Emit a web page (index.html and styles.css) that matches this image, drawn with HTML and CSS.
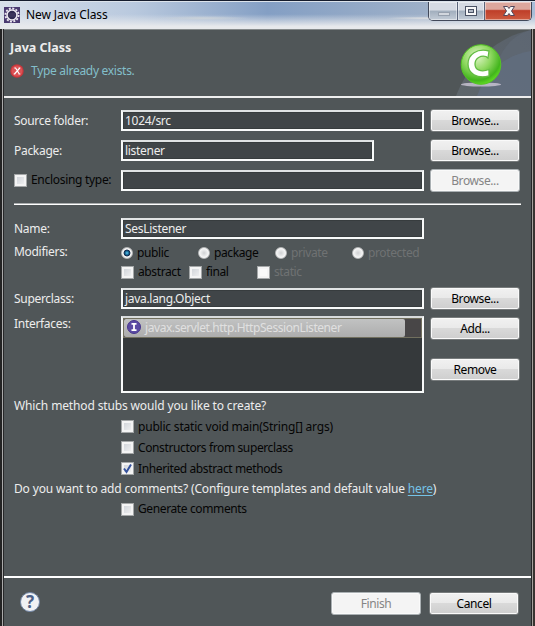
FILE: index.html
```html
<!DOCTYPE html>
<html lang="en">
<head>
<meta charset="utf-8">
<title>New Java Class</title>
<link rel="stylesheet" href="styles.css">
</head>
<body>
<div class="window">
  <div class="titlebar">
    <svg class="app-icon" width="16" height="16" viewBox="0 0 16 16"><rect width="16" height="16" fill="#493970"/><circle cx="8" cy="8" r="6.6" fill="none" stroke="#eeeaf2" stroke-width="1.8" stroke-dasharray="2 1.46"/><circle cx="8" cy="8" r="5" fill="#302a51" stroke="#eeeaf2" stroke-width="1.6"/><path d="M4.4 7h7.2M4.4 9h7.2" stroke="#554c72" stroke-width=".7"/></svg>
    <span class="title">New Java Class</span>
    <div class="controls">
      <div class="ctl"><svg width="28" height="19"><rect x="9.5" y="10.500" width="11" height="3" fill="#d2d7de" stroke="#96a0ae"/></svg></div>
      <div class="ctl"><svg width="26" height="19"><rect x="7.500" y="4.500" width="11" height="9" fill="#f7f7f8" stroke="#4b5365"/><rect x="10.500" y="7.500" width="5" height="3" fill="#b3bac6" stroke="#4b5365"/></svg></div>
      <div class="ctl close"><svg width="46" height="19"><path d="M18.500 4.500h4l1.500 2 1.500-2h4l-3 4.500 3 4.500h-4l-1.500-2-1.500 2h-4l3-4.500z" fill="#f8f8f8" stroke="#53475a"/></svg></div>
    </div>
  </div>
  <div class="dialog">
    <div class="header">
      <div class="header-text">
        <div class="heading">Java Class</div>
        <div class="message">
          <svg width="14" height="14" viewBox="0 0 14 14"><circle cx="7" cy="7" r="6.700" fill="#c9373b"/><circle cx="7" cy="7" r="5.500" fill="#dc5154"/><path d="M4.300 4h1.300L9.300 10M9.800 4 4.500 10M3.700 10h1.600M8.500 10h1.800M8.600 4h1.700" fill="none" stroke="#fff" stroke-width="1.200"/></svg>
          <span>Type already exists.</span>
        </div>
      </div>
      <svg class="banner" width="77" height="66" viewBox="0 0 77 66">
        <defs>
          <linearGradient id="sky" x1="0" y1="1" x2="1" y2="0"><stop offset="0" stop-color="#5e666b"/><stop offset="1" stop-color="#59616b"/></linearGradient>
          <radialGradient id="green" cx=".4" cy=".3" r=".75"><stop offset="0" stop-color="#e0f5c9"/><stop offset=".45" stop-color="#91d963"/><stop offset=".8" stop-color="#42b51c"/><stop offset="1" stop-color="#68e624"/></radialGradient>
        </defs>
        <path d="M77 0C43 7 15 32 2 66h75z" fill="url(#sky)"/>
        <path d="M77 0C62 4 50 14 43 34L23 66h54z" fill="#626c7a" opacity=".5"/>
        <path d="M77 21C51 25 31 42 23 66h54z" fill="#626d80" opacity=".75"/>
        <ellipse cx="27" cy="54.500" rx="20" ry="2" fill="#d4cddd" opacity=".75"/>
        <circle cx="27" cy="34.500" r="19.800" fill="url(#green)" stroke="#55c424"/>
        <path d="M35 21C23 18 14 24.500 14 34S23 49 35 46V39.500C27 42.500 21 40 21 34S27 25 32 26.500L34 28z" fill="#fff" stroke="#63bc43" stroke-width="1.300"/>
      </svg>
    </div>
    <div class="form">
      <div class="row"><div class="label">Source folder:</div><div class="field">1024/src</div><div class="btn">Browse...</div></div>
      <div class="row"><div class="label">Package:</div><div class="field short">listener</div><div class="btn">Browse...</div></div>
      <div class="row last"><div class="label dark"><i class="check"></i><span class="enclosing">Enclosing type:</span></div><div class="field"></div><div class="btn off">Browse...</div></div>
      <div class="separator"></div>
      <div class="row name"><div class="label">Name:</div><div class="field">SesListener</div></div>
      <div class="row modifiers"><div class="label">Modifiers:</div>
        <div class="options radios">
          <div class="opt"><i class="radio on"></i>public</div><div class="opt"><i class="radio"></i>package</div><div class="opt dim"><i class="radio"></i>private</div><div class="opt dim"><i class="radio"></i>protected</div>
        </div>
      </div>
      <div class="options checks"><div class="opt"><i class="check"></i>abstract</div><div class="opt"><i class="check"></i>final</div><div class="opt dim"><i class="check"></i>static</div></div>
      <div class="row super"><div class="label">Superclass:</div><div class="field">java.lang.Object</div><div class="btn">Browse...</div></div>
      <div class="row interfaces"><div class="label">Interfaces:</div>
        <div class="list"><div class="item"><div class="selected"><svg width="14" height="14" viewBox="0 0 14 14"><circle cx="7" cy="7" r="6.500" fill="#5b4ba3" stroke="#47378c"/><path d="M4.500 3.800h5M4.500 10.200h5M7 4v6" stroke="#fff" stroke-width="1.800"/></svg><span>javax.servlet.http.HttpSessionListener</span></div></div></div>
        <div class="side"><div class="btn">Add...</div><div class="btn">Remove</div></div>
      </div>
      <div class="question stubs">Which method stubs would you like to create?</div>
      <div class="stub-list">
        <div class="opt main"><i class="check"></i>public static void main(String[] args)</div>
        <div class="opt ctor"><i class="check"></i>Constructors from superclass</div>
        <div class="opt inherit"><i class="check"><svg width="11" height="11" viewBox="0 0 11 11"><path d="M2 5.500 4.500 9 9 1.500" fill="none" stroke="#34519c" stroke-width="2"/></svg></i>Inherited abstract methods</div>
      </div>
      <div class="question comments">Do you want to add comments? (Configure templates and default value <span class="link">here</span>)</div>
      <div class="opt generate"><i class="check"></i>Generate comments</div>
    </div>
    <div class="footer">
      <div class="help">?</div>
      <div class="btn off">Finish</div><div class="btn">Cancel</div>
    </div>
  </div>
</div>
</body>
</html>
```
FILE: styles.css
```css
* { box-sizing: border-box; }
body { margin: 0; font: 12px/20px "Noto Sans", "Open Sans", sans-serif; color: #ededed; white-space: nowrap; }
i { font-style: normal; }
svg { display: block; flex: none; }
.window { width: 535px; height: 626px; padding: 0 4px; overflow: hidden; background: linear-gradient(90deg, #242424 0 2px, #aaa 2px 3px, #272829 3px 4px, transparent 4px 531px, #262728 531px 532px, #a5a19c 532px 533px, #393431 533px); border-top: 1px solid #151c2d; }
.titlebar { height: 28px; margin: 0 -4px; padding-left: 4px; display: flex; align-items: flex-start; color: #000; background: radial-gradient(ellipse at 38% 60%, #ccd3d9 0, transparent 10%), radial-gradient(ellipse at 80% 60%, #e0e1e2 0, transparent 7%), linear-gradient(180deg, #ffffff00 0 45%, #e7e9ec 90%), linear-gradient(90deg, #d7dfea, #b9c9de 25%, #849fc4 50%, #9eb0c8 80%, #a8bdd8); border-top: 1px solid #dce3eb; }
.app-icon { margin-top: 5px; }
.title { margin: 3px 0 0 6px; letter-spacing: -.1px; }
.controls { display: flex; margin-left: auto; margin-right: 3px; border: 1px solid #42495a; border-top: 0; border-radius: 0 0 5px 5px; overflow: hidden; }
.ctl { height: 18px; border-right: 1px solid #59647a; background: linear-gradient(#d5dae3 0 45%, #a1aebd 50%, #c3ccd7); box-shadow: inset 0 0 0 1px #ffffff70; }
.close { border: 0; background: linear-gradient(#dca79d 0 40%, #bf3e29 48%, #cd5b40); }
.dialog { height: 597px; background: #505658; display: flex; flex-direction: column; border-top: 1px solid #858a8b; }
.header { height: 68px; flex: none; border-bottom: 2px solid #eee; display: flex; justify-content: space-between; overflow: hidden; }
.header-text { padding: 8px 0 0 6px; }
.heading { font-weight: 700; font-size: 12.5px; }
.message { display: flex; align-items: center; gap: 7px; color: #83bfca; margin-top: 3px; letter-spacing: -.3px; }
.form { padding: 11px 10px 0; height: 478px; flex: none; display: flex; flex-direction: column; }
.row { height: 30px; display: flex; flex: none; }
.row.last { height: 34px; }
.label { width: 107px; flex: none; line-height: 24px; letter-spacing: -.3px; }
.label.dark { display: flex; gap: 4px; align-items: center; height: 22px; color: #050505; }
.field { width: 303px; height: 21px; margin-top: 1px; border: 2px solid #f8fafa; border-top-color: #e0e3e4; background: #404548; padding-left: 2px; line-height: 17px; letter-spacing: -.3px; box-shadow: inset 0 0 0 1px #373c3e; }
.field.short { width: 253px; margin-right: 50px; }
.btn { width: 90px; height: 23px; margin-left: 6px; border: 1px solid #777b7c; border-radius: 3px; box-shadow: inset 0 0 0 1px #fafafa; background: linear-gradient(#f1f1f1 0, #e9e9e9 49%, #d9d9d9 50%, #cecece); text-align: center; line-height: 21px; color: #000; letter-spacing: -.4px; flex: none; }
.btn.off { background: #f4f4f4; color: #858585; border-color: #aab0b3; }
.separator { width: 507px; height: 2px; flex: none; background: linear-gradient(#a9acad 50%, #fff 50%); }
.row.name { height: 26px; margin-top: 12px; }
.row.modifiers { height: 19px; }
.modifiers .label { line-height: 18px; }
.options { display: flex; }
.opt { display: flex; align-items: center; gap: 4px; color: #050505; letter-spacing: -.38px; height: 20px; flex: none; }
.opt.dim { color: #6f7273; }
.radios .opt { width: 77px; height: 19px; }
.checks { margin-left: 107px; height: 20px; }
.checks .opt:nth-child(1), .checks .opt:nth-child(2) { width: 68px; }
.check { width: 13px; height: 13px; flex: none; border: 1px solid #a4a7a8; background: linear-gradient(135deg, #cbcfd5, #f5f5f5); box-shadow: inset 0 0 0 2px #f4f4f4; }
.dim .check { background: #fafafa; }
.check svg { width: 11px; height: 11px; }
.radio { width: 12px; height: 12px; flex: none; border: 1px solid #b4b6b7; border-radius: 50%; background: radial-gradient(#cfd1d3, #fafafa 70%); }
.radio.on { background: radial-gradient(circle at 50% 50%, #62c9f0 0, #156997 25%, #14294a 42%, #f4f4f4 54%); }
.row.super { height: 29px; margin-top: 5px; }
.row.interfaces { height: 77px; }
.interfaces .label { line-height: 15px; }
.list { width: 303px; height: 77px; border: 2px solid #f8fafa; border-top-color: #d8dbdc; background: #35393b; }
.item { height: 20px; border: 1px solid #716f5e; background: #484647; }
.selected { width: 281px; height: 18px; display: flex; align-items: center; gap: 4px; padding-left: 3px; border-radius: 2px; background: linear-gradient(#c1c2c2, #adadad); color: #e0e0e0; letter-spacing: -.43px; }
.selected svg { margin-top: -3px; }
.side .btn { margin-top: 1px; }
.side .btn + .btn { margin-top: 18px; }
.question { height: 20px; flex: none; letter-spacing: -.14px; }
.stubs { margin-top: 3px; height: 20px; }
.stub-list, .generate { margin-left: 107px; }
.stub-list .opt { height: 21px; }
.stub-list .main { letter-spacing: -.2px; }
.comments { letter-spacing: -.155px; }
.link { color: #75c2e6; text-decoration: underline; text-underline-offset: 2px; }
.footer { flex: 1; border-top: 2px solid #fff; display: flex; padding: 14px 12px 0 16px; }
.help { width: 20px; height: 20px; margin-right: auto; border-radius: 50%; background: #f0f1f4; border: 1px solid #7186a7; color: #4b5f86; font-weight: 700; font-size: 17px; line-height: 18px; text-align: center; }
.footer .btn + .btn { margin-left: 8px; }
```
